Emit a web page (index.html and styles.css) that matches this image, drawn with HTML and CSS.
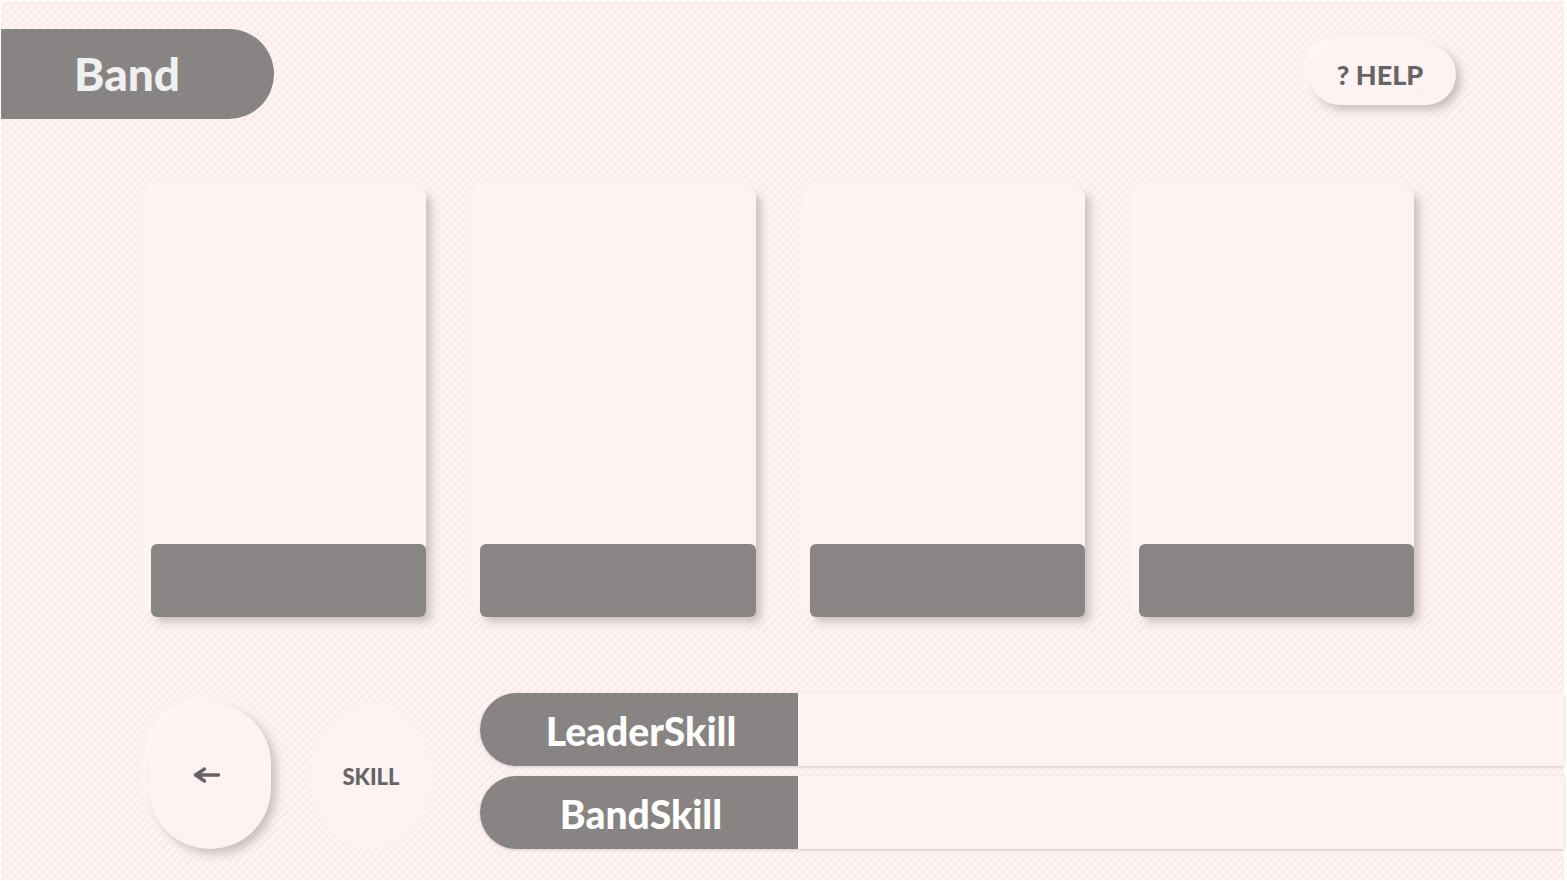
FILE: index.html
```html
<!DOCTYPE html>
<html lang="en">
<head>
<meta charset="utf-8">
<meta name="viewport" content="width=device-width, initial-scale=1">
<title>Band</title>
<link rel="stylesheet" href="styles.css">
</head>
<body>
<div class="screen">
  <header class="top">
    <h1 class="title">Band</h1>
    <button class="help" type="button">? HELP</button>
  </header>
  <main class="cards">
    <article class="card"><div class="card-name"></div></article>
    <article class="card"><div class="card-name"></div></article>
    <article class="card"><div class="card-name"></div></article>
    <article class="card"><div class="card-name"></div></article>
  </main>
  <footer class="bottom">
    <button class="round back" type="button" aria-label="Back">
      <svg width="28" height="18" viewBox="0 0 28 18" fill="none" stroke="currentColor" stroke-width="3.400" stroke-linecap="round" stroke-linejoin="round"><path d="M25.500 9H4M11.500 3 2.500 9 11.500 15"/><path d="M3 9 8 6V12Z" fill="currentColor" stroke-width="1"/></svg>
    </button>
    <button class="round skill" type="button">SKILL</button>
    <div class="skills">
      <section class="bar"><h2 class="bar-label">LeaderSkill</h2><div class="bar-value"></div></section>
      <section class="bar"><h2 class="bar-label">BandSkill</h2><div class="bar-value"></div></section>
    </div>
  </footer>
</div>
</body>
</html>
```
FILE: styles.css
```css
* {
  box-sizing: border-box;
}

body {
  margin: 0;
  padding: 1px 3px 1px 1px;
  background: #fff;
  color: #666464;
  font-family: Lato, "Liberation Sans", sans-serif;
}

.screen {
  min-height: calc(100vh - 2px);
  padding: 28px 0 31px;
  background-color: #fef2f2;
  background-image: linear-gradient(-45deg, transparent 40%, #efe1e1 40% 50%, transparent 50% 90%, #efe1e1 90%);
  background-size: 8px 8px;
}

button {
  border: 0;
  padding: 0;
  background: #fef2f2;
  color: inherit;
  font-family: inherit;
  font-weight: 900;
}

h1,
h2 {
  margin: 0;
}

.title,
.bar-label {
  background-color: #888584;
  background-image: linear-gradient(-45deg, transparent 40%, #7f7c7b 40% 50%, transparent 50% 90%, #7f7c7b 90%);
  background-size: 8px 8px;
  font-weight: 900;
}

.top {
  display: flex;
  align-items: center;
  justify-content: space-between;
  padding-right: 108px;
}

.title {
  padding: 0 94px 0 73px;
  border-radius: 0 45px 45px 0;
  color: #f0f0f0;
  font-size: 46px;
  line-height: 90px;
}

.help {
  width: 147px;
  height: 61px;
  padding-right: 5px;
  border-radius: 31px;
  font-size: 27px;
  box-shadow: 5px 5px 8px #cbbfbf, -5px -5px 8px #fff8f8;
}

.cards {
  display: grid;
  grid-template-columns: repeat(4, 1fr);
  gap: 54px;
  margin: 71px 150px 76px;
}

.card {
  display: flex;
  flex-direction: column;
  justify-content: flex-end;
  height: 427px;
  border-radius: 6px;
  background: #fef2f2;
  box-shadow: 5px 5px 8px #cbbfbf, -5px -5px 8px #fff8f8;
}

.card-name {
  height: 73px;
  border-radius: 6px;
  background: #888584;
}

.bottom {
  display: flex;
  align-items: flex-end;
  padding-left: 148px;
}

.round {
  flex: none;
  display: grid;
  place-items: center;
  width: 122px;
  height: 146px;
}

.back {
  margin-right: 39px;
  padding: 0 6px 2px 0;
  border-radius: 61px;
  box-shadow: 5px 5px 10px #cbbfbf, -5px -5px 10px #fff8f8;
}

.skill {
  margin-right: 48px;
  border-radius: 50%;
  font-size: 22px;
}

.skills {
  flex: 1;
  display: grid;
  gap: 10px;
}

.bar {
  display: flex;
  height: 73px;
  border-radius: 37px 0 0 37px;
  box-shadow: 0 1px 3px #d4c8c8;
}

.bar-label {
  width: 318px;
  padding-left: 4px;
  border-radius: 37px 0 0 37px;
  color: #fff;
  font-size: 39px;
  line-height: 76px;
  text-align: center;
}

.bar-value {
  flex: 1;
  background: #fef2f2;
}
```
